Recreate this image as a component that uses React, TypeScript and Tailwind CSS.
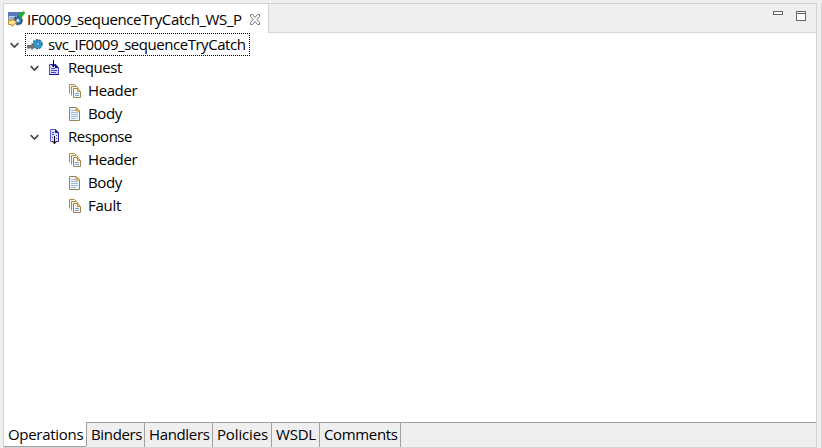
import type { ReactNode } from "react";

function Chevron() {
  return (
    <svg className="mt-px block shrink-0" width="10" height="7" viewBox="0 0 10 7" fill="none" stroke="#484848" strokeWidth="1.7">
      <path d="M.7 1.200 4.500 5 8.300 1.200" />
    </svg>
  );
}

function ServiceIcon() {
  return (
    <svg className="block shrink-0" width="17" height="16" viewBox="0 0 17 16">
      <rect x="0.5" y="1.5" width="13" height="11" fill="#b7cdea" stroke="#7187a8" />
      <path d="M0 1h14v4H0z" fill="#5b79b8" />
      <path d="M2 7h4M2 9h3" stroke="#7f9cc8" />
      <circle cx="10" cy="9.500" r="3.900" fill="#3a78b5" stroke="#24517f" strokeWidth="1.800" strokeDasharray="2 .8" />
      <circle cx="10" cy="9.500" r="1.500" fill="#d8eafa" />
      <path d="M.5 9.500H4v-2l4.500 4-4.500 4v-2H.5z" fill="#ffe394" stroke="#c98b2b" />
      <path d="m11 3 2 2.500L16 .8" fill="none" stroke="#12b51b" strokeWidth="2.600" />
    </svg>
  );
}

function OperationIcon() {
  return (
    <svg className="block shrink-0" width="17" height="12" viewBox="0 0 17 12">
      <circle cx="10.500" cy="5.200" r="4.300" fill="#2e9bd0" stroke="#24759f" strokeWidth="1.800" strokeDasharray="2.300 .7" />
      <circle cx="10.500" cy="5.200" r="3.500" fill="#2f9fd5" />
      <circle cx="11" cy="5" r="1.500" fill="#bde9fa" stroke="#27648a" strokeWidth=".9" />
      <path d="M0 6h4.500V3.500L8.500 7.500l-4 4V9.500H0z" fill="#737373" />
    </svg>
  );
}

function MessageIcon({ out = false }: { out?: boolean }) {
  return (
    <svg className="ml-px block shrink-0" width="11" height="16" viewBox="0 0 11 16">
      {out ? (
        <>
          <path d="M1.500 .5h5l3 3v9h-8z" fill="#dedeff" stroke="#5a5ae8" />
          <path d="M6 0v4h4z" fill="#171799" />
          <path d="M9.500 4v9" stroke="#2929a5" />
          <path d="M3 3.500h2M3 5.500h2M3 8.500h1M7 6.500h1M7 9.500h1" stroke="#4b4bd8" />
          <path d="M5.500 7v8M3.300 12.500l2.200 2.200 2.200-2.200" fill="none" stroke="#000" />
        </>
      ) : (
        <>
          <path d="M.5 4.500h6l3 3v7h-9z" fill="#d8d8ff" stroke="#4a4adc" />
          <path d="M6 4v4h4z" fill="#171799" />
          <path d="M2 8.500h4M2 10.500h6M2 12.500h5" stroke="#4747dc" />
          <path d="M4.500 0v7M2.300 4.500l2.200 2.200 2.200-2.200" fill="none" stroke="#000" />
          <path d="M0 14.500h10" stroke="#171799" />
        </>
      )}
    </svg>
  );
}

function DocumentIcon() {
  return (
    <svg className="ml-px block shrink-0" width="11" height="14" viewBox="0 0 11 14">
      <path d="M.5.500h6.500l3.500 3.500v9.500H.5z" fill="#edf5ff" stroke="#968058" />
      <path d="M7 .5V4h3.500z" fill="#edc978" stroke="#c69539" />
      <path d="M2 3.500h4M2 5.500h7M2 7.500h7M2 9.500h7M2 11.500h5" stroke="#a0b9d9" />
    </svg>
  );
}

function DocumentsIcon() {
  return (
    <svg className="ml-px block shrink-0" width="12" height="14" viewBox="0 0 12 14">
      <path d="M.5 9.500v-9h5l2 2" fill="#fff9e9" stroke="#b18a43" />
      <path d="M2.500 11.500v-9h5l2 2" fill="#fff9e9" stroke="#b18a43" />
      <path d="M4.500 4.500h4l3 3v6h-7z" fill="#f4f9ff" stroke="#a18353" />
      <path d="M8.500 4.500v3h3z" fill="#edc978" stroke="#c69539" />
      <path d="M6 9.500h4M6 11.500h4" stroke="#82a3ce" />
    </svg>
  );
}

function TreeRow({ icon, label, indent, tracking }: { icon: ReactNode; label: string; indent: string; tracking: string }) {
  return (
    <div className={`flex h-[23px] items-center ${indent}`}>
      {indent === "pl-[26px]" && <Chevron />}
      <span className={`flex w-5 shrink-0 ${indent === "pl-[26px]" ? "ml-2" : ""}`}>{icon}</span>
      <span className={`pb-[2px] ${tracking}`}>{label}</span>
    </div>
  );
}

function BottomTab({ label, width, tracking }: { label: string; width: string; tracking: string }) {
  return (
    <div className={`flex h-[25px] shrink-0 items-center border-r border-t border-[#a0a0a0] pl-1 ${width}`}>
      <span className={`pb-[2px] ${tracking}`}>{label}</span>
    </div>
  );
}

export default function App() {
  return (
    <div className="flex h-[448px] w-[822px] overflow-hidden bg-[#efefef] pl-[3px] pt-[3px] font-['Open_Sans','Noto_Sans',sans-serif] text-[15px] leading-[22px] whitespace-nowrap text-black">
      <main className="flex h-[445px] w-[814px] shrink-0 flex-col border border-[#d5d5d5]">
        <header className="flex h-[29px] shrink-0">
          <div className="flex w-[265px] shrink-0 items-center border-r border-[#d5d5d5] bg-white pl-1 pt-px">
            <ServiceIcon />
            <span className="ml-[2px] w-[218px] pb-px tracking-[-0.390px]">IF0009_sequenceTryCatch_WS_P</span>
            <svg className="ml-[4px] block" width="12" height="11" viewBox="0 0 12 11" fill="none" stroke="#777">
              <path d="M1.500 .5h2L6 3.500l2.500-3h2v2L8 5.500l2.500 3v2h-2L6 7.500l-2.500 3h-2v-2l2.500-3-2.500-3z" />
            </svg>
          </div>
          <div className="flex grow justify-end gap-[13px] border-b border-[#d5d5d5] pr-[10px] pt-[7px]">
            <span className="h-1 w-[10px] border border-[#666] bg-white" />
            <span className="h-[10px] w-[10px] border border-[#666] bg-white"><span className="mt-px block h-px bg-[#666]" /></span>
          </div>
        </header>
        <section className="h-[389px] shrink-0 bg-white">
          <div className="flex h-[23px] items-center pl-[6px]">
            <Chevron />
            <div className="ml-[5px] flex h-[23px] w-[225px] items-center border border-dotted border-black pl-px">
              <OperationIcon />
              <span className="ml-1 pb-[2px] tracking-[-0.460px]">svc_IF0009_sequenceTryCatch</span>
            </div>
          </div>
          <TreeRow indent="pl-[26px]" icon={<MessageIcon />} label="Request" tracking="tracking-[-0.450px]" />
          <TreeRow indent="pl-[64px]" icon={<DocumentsIcon />} label="Header" tracking="tracking-[-0.400px]" />
          <TreeRow indent="pl-[64px]" icon={<DocumentIcon />} label="Body" tracking="tracking-[-0.400px]" />
          <TreeRow indent="pl-[26px]" icon={<MessageIcon out />} label="Response" tracking="tracking-[-0.480px]" />
          <TreeRow indent="pl-[64px]" icon={<DocumentsIcon />} label="Header" tracking="tracking-[-0.400px]" />
          <TreeRow indent="pl-[64px]" icon={<DocumentIcon />} label="Body" tracking="tracking-[-0.400px]" />
          <TreeRow indent="pl-[64px]" icon={<DocumentsIcon />} label="Fault" tracking="tracking-[-0.250px]" />
        </section>
        <nav className="flex h-[25px] shrink-0">
          <div className="flex h-[25px] w-[82px] shrink-0 items-center border-b border-[#a0a0a0] bg-white pl-1">
            <span className="tracking-[-0.300px]">Operations</span>
          </div>
          <div className="h-6 w-px bg-[#a0a0a0]" />
          <BottomTab label="Binders" width="w-[58px]" tracking="tracking-[-0.350px]" />
          <BottomTab label="Handlers" width="w-[68px]" tracking="tracking-[-0.350px]" />
          <BottomTab label="Policies" width="w-[59px]" tracking="tracking-[-0.150px]" />
          <BottomTab label="WSDL" width="w-[48px]" tracking="tracking-[-0.200px]" />
          <BottomTab label="Comments" width="w-[81px]" tracking="tracking-[-0.350px]" />
          <div className="h-6 grow border-t border-[#a0a0a0]" />
        </nav>
      </main>
      <div className="ml-1 w-px shrink-0 bg-[#d5d5d5]" />
    </div>
  );
}
